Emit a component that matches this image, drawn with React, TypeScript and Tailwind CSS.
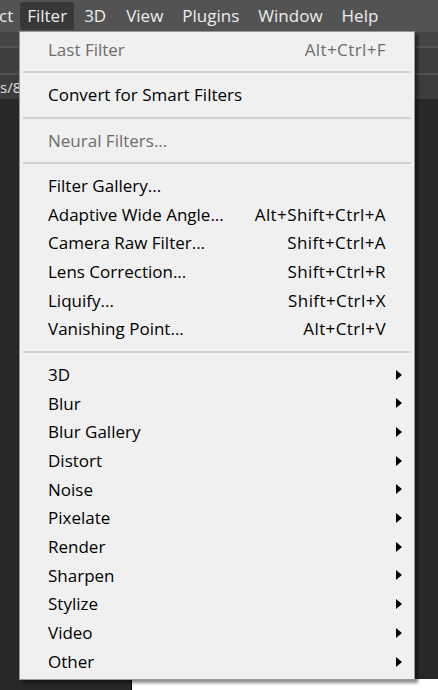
const font = { fontFamily: '"Open Sans", "Noto Sans", sans-serif' };

type Item = { label: string; shortcut?: string; disabled?: boolean; sub?: boolean } | "sep";

const items: Item[] = [
  { label: "Last Filter", shortcut: "Alt+Ctrl+F", disabled: true },
  "sep",
  { label: "Convert for Smart Filters" },
  "sep",
  { label: "Neural Filters...", disabled: true },
  "sep",
  { label: "Filter Gallery..." },
  { label: "Adaptive Wide Angle...", shortcut: "Alt+Shift+Ctrl+A" },
  { label: "Camera Raw Filter...", shortcut: "Shift+Ctrl+A" },
  { label: "Lens Correction...", shortcut: "Shift+Ctrl+R" },
  { label: "Liquify...", shortcut: "Shift+Ctrl+X" },
  { label: "Vanishing Point...", shortcut: "Alt+Ctrl+V" },
  "sep",
  { label: "3D", sub: true },
  { label: "Blur", sub: true },
  { label: "Blur Gallery", sub: true },
  { label: "Distort", sub: true },
  { label: "Noise", sub: true },
  { label: "Pixelate", sub: true },
  { label: "Render", sub: true },
  { label: "Sharpen", sub: true },
  { label: "Stylize", sub: true },
  { label: "Video", sub: true },
  { label: "Other", sub: true },
];

function Arrow() {
  return (
    <svg width="6" height="10" viewBox="0 0 6 10" className="block">
      <path d="M0 0 L6 5 L0 10 Z" fill="#000" />
    </svg>
  );
}

export default function App() {
  return (
    <div className="relative w-[438px] h-[690px] overflow-hidden bg-[#282828]" style={font}>
      {/* menu bar */}
      <div className="h-[32px] bg-[#535353] flex items-center text-[17px] text-[#ececec]">
        <span className="-ml-[1px] pr-[7px]">ct</span>
        <span className="px-[7px] py-[1px] rounded-[3px] bg-[#383838]">Filter</span>
        <span className="ml-[10px]">3D</span>
        <span className="ml-[20px]">View</span>
        <span className="ml-[19px]">Plugins</span>
        <span className="ml-[19px]">Window</span>
        <span className="ml-[19px]">Help</span>
      </div>
      {/* workspace behind */}
      <div className="h-[14px] bg-[#454545]" />
      <div className="h-[2px] bg-[#555555]" />
      <div className="h-[25px] bg-[#3e3e3e]" />
      <div className="h-[2px] bg-[#505050]" />
      <div className="h-[24px] bg-[#3c3c3c] flex items-center text-[15px] text-[#e0e0e0]">
        <span>s/8</span>
      </div>
      <div className="h-[580px]" />
      <div className="flex h-[20px]">
        <div className="w-[132px] bg-[#282828] border-r border-black" />
        <div className="flex-1 bg-white" />
      </div>

      {/* dropdown */}
      <div className="absolute left-[19px] top-[31px] w-[396px] bg-[#f0f0f0] border border-[#979797] shadow-[3px_3px_3px_rgba(0,0,0,0.45)] py-[3px]">
        {items.map((it, i) =>
          it === "sep" ? (
            <div key={i} className="h-[2px] bg-[#d2d2d2] mx-[3px] my-[7.4px]" />
          ) : (
            <div
              key={i}
              className={`h-[28.7px] flex items-center pl-[28px] pr-[12px] text-[17px] ${it.disabled ? "text-[#6d6d6d]" : "text-black"}`}
            >
              <span className="flex-1">{it.label}</span>
              {it.shortcut && <span className="mr-[16px] tracking-[0.4px]">{it.shortcut}</span>}
              {it.sub && <Arrow />}
            </div>
          )
        )}
      </div>
    </div>
  );
}
